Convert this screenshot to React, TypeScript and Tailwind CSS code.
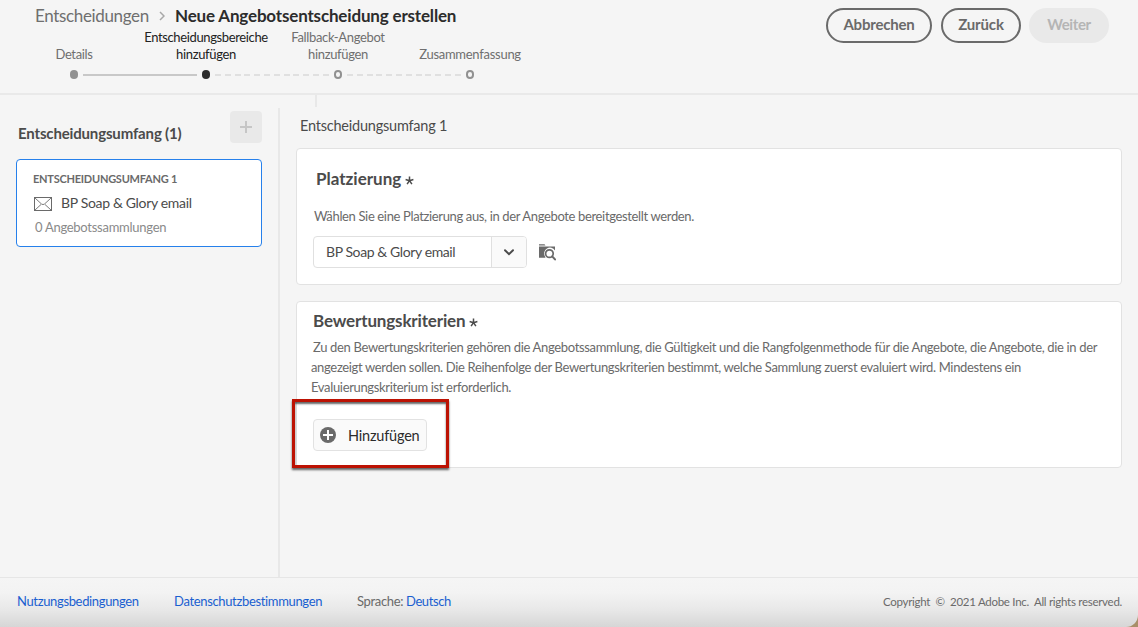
import type { ReactNode } from "react";

function Asterisk() {
  return (
    <svg width="9" height="9" viewBox="0 0 9 9" fill="none" stroke="#4b4b4b" strokeWidth="1.5" className="mt-[2px]">
      <path d="M4.5 4.7V.5M4.5 4.7L.6 3.5M4.5 4.7l3.9-1.2M4.5 4.7L2.1 8.2M4.5 4.7L6.9 8.2" />
    </svg>
  );
}

function FolderSearch() {
  return (
    <svg width="18" height="18" viewBox="0 0 18 18" className="ml-[11px]">
      <path d="M1 1.2h5.5l1 1.3H1zM1 3.4h16v4a5.6 5.6 0 0 0-10 6.1l.5 1.3H1z" fill="#6a6a6a" />
      <circle cx="11.4" cy="10.6" r="3.8" fill="#fff" stroke="#6a6a6a" strokeWidth="1.7" />
      <path d="M14.2 13.4l2.8 3" stroke="#6a6a6a" strokeWidth="2.1" strokeLinecap="round" />
    </svg>
  );
}

function StepLabel({ children, active = false }: { children: ReactNode; active?: boolean }) {
  return (
    <div className={active ? "flex w-[132px] flex-col items-center justify-end text-[#222]" : "flex w-[132px] flex-col items-center justify-end text-[#6f6f6f]"}>
      {children}
    </div>
  );
}

function Panel({ children, className }: { children: ReactNode; className: string }) {
  return <section className={`rounded-[4px] border border-[#e2e2e2] bg-white ${className}`}>{children}</section>;
}

export default function App() {
  return (
    <div className="flex h-[627px] w-[1138px] flex-col overflow-hidden whitespace-nowrap bg-[#f5f5f5] font-['Lato',sans-serif] text-[13px] text-[#4b4b4b]">
      <header className="flex h-[95px] shrink-0 justify-between border-b-2 border-[#e9e9e9]">
        <div>
          <nav className="flex h-7 items-center pt-1 pl-[35px] text-[17px]">
            <span className="w-[124px] tracking-[-0.35px] text-[#6f6f6f]">Entscheidungen</span>
            <svg width="6" height="10" viewBox="0 0 6 10" fill="none" stroke="#a8a8a8" strokeWidth="1.5" className="mr-2.5">
              <path d="M1 1l4 4-4 4" />
            </svg>
            <h1 className="font-bold tracking-[-0.17px] text-[#2c2c2c]">Neue Angebotsentscheidung erstellen</h1>
          </nav>
          <div className="flex h-[35px] pl-2 leading-[17px]">
            <StepLabel>
              <span className="tracking-[-0.35px]">Details</span>
            </StepLabel>
            <StepLabel active>
              <span className="tracking-[-0.37px]">Entscheidungsbereiche</span>
              <span className="tracking-[-0.35px]">hinzufügen</span>
            </StepLabel>
            <StepLabel>
              <span className="tracking-[-0.35px]">Fallback-Angebot</span>
              <span className="tracking-[-0.35px]">hinzufügen</span>
            </StepLabel>
            <StepLabel>
              <span className="tracking-[-0.27px]">Zusammenfassung</span>
            </StepLabel>
          </div>
          <div className="flex items-center pt-[7px] pl-[70px]">
            <i className="h-[9px] w-2 rounded-full bg-[#919191]" />
            <i className="mx-[5px] h-0.5 w-[114px] bg-[#c8c8c8]" />
            <i className="h-[9px] w-2 rounded-full bg-[#2c2c2c]" />
            <i className="mx-[5px] h-0.5 w-[114px] bg-[repeating-linear-gradient(90deg,#e0e0e0_0_6px,transparent_6px_9.8px)]" />
            <i className="h-[9px] w-2 rounded-full border-2 border-[#919191]" />
            <i className="mx-[5px] h-0.5 w-[114px] bg-[repeating-linear-gradient(90deg,#e0e0e0_0_6px,transparent_6px_9.8px)]" />
            <i className="h-[9px] w-2 rounded-full border-2 border-[#919191]" />
          </div>
        </div>
        <div className="flex pt-2 pr-[29px] text-[15px] font-bold text-[#6a6a6a]">
          <button className="mr-[9px] h-[35px] w-[106px] rounded-full border-2 border-[#6a6a6a] pb-[3px] tracking-[-0.2px]">Abbrechen</button>
          <button className="mr-2 h-[35px] w-[80px] rounded-full border-2 border-[#6a6a6a] pb-[3px] tracking-[-0.15px]">Zurück</button>
          <button className="h-[35px] w-[80px] rounded-full bg-[#e9e9e9] pb-[3px] tracking-[-0.4px] text-[#b5b5b5]">Weiter</button>
        </div>
      </header>

      <main className="flex h-[482px] shrink-0">
        <aside className="w-[278px] pt-4 pl-4">
          <div className="flex h-8 w-[246px] justify-between">
            <h2 className="pt-[12px] pl-[2px] text-[15px] leading-5 font-bold tracking-[-0.16px]">Entscheidungsumfang (1)</h2>
            <button className="flex size-8 items-center justify-center rounded-[4px] bg-[#e9e9e9]">
              <svg width="12" height="12" viewBox="0 0 12 12" stroke="#c6c6c6" strokeWidth="2">
                <path d="M6 0v12M0 6h12" />
              </svg>
            </button>
          </div>
          <div className="mt-4 h-[88px] w-[246px] rounded-[4px] border border-[#2680eb] bg-white pt-[11px] pl-[17px]">
            <div className="-ml-px text-[11px] leading-4 font-bold tracking-[-0.24px] text-[#6a6a6a]">ENTSCHEIDUNGSUMFANG 1</div>
            <div className="mt-[7px] flex h-[18px] items-center text-sm tracking-[-0.33px]">
              <svg width="18" height="14" viewBox="0 0 18 14" fill="none" stroke="#6a6a6a" className="mt-0.5 mr-[9px]">
                <rect x=".5" y=".5" width="17" height="13" />
                <path d="M1 1l6.5 6q1.5 1.2 3 0L17 1M1 13l6-5.5M17 13l-6-5.5" strokeWidth=".9" />
              </svg>
              BP Soap &amp; Glory email
            </div>
            <div className="mt-[7px] pl-px leading-4 tracking-[-0.27px] text-[#8a8a8a]">0 Angebotssammlungen</div>
          </div>
        </aside>

        <div className="mt-[13px] w-0.5 bg-[#e8e8e8]" />

        <div className="w-[858px] pr-4 pl-4">
          <div className="ml-[19px] h-3 w-0.5 bg-[#e8e8e8]" />
          <h2 className="mt-[9px] mb-[12px] pl-1 text-[14.5px] leading-5 tracking-[-0.22px]">Entscheidungsumfang 1</h2>
          <Panel className="h-[137px] pl-4">
            <h3 className="flex items-center gap-[4px] pt-[20px] pl-[3px] text-[17px] leading-5 font-bold">
              Platzierung <Asterisk />
            </h3>
            <p className="mt-[18px] pl-[1px] leading-[18px] tracking-[-0.355px] text-[#6a6a6a]">
              Wählen Sie eine Platzierung aus, in der Angebote bereitgestellt werden.
            </p>
            <div className="mt-[11px] flex items-center">
              <div className="flex h-8 w-[214px] overflow-hidden rounded-[4px] border border-[#e0e0e0]">
                <span className="flex-1 pl-3 text-sm leading-[29px] tracking-[-0.4px]">BP Soap &amp; Glory email</span>
                <span className="flex w-[35px] items-center justify-center border-l border-[#e0e0e0] bg-[#fafafa]">
                  <svg width="10" height="7" viewBox="0 0 10 7" fill="none" stroke="#4b4b4b" strokeWidth="2" strokeLinecap="round">
                    <path d="M1 1.2l4 4 4-4" />
                  </svg>
                </span>
              </div>
              <FolderSearch />
            </div>
          </Panel>
          <Panel className="mt-4 h-[167px] pl-[14px] text-[#6a6a6a]">
            <h3 className="flex items-center gap-1 pt-[9px] pl-[2px] text-[17px] leading-5 font-bold tracking-[-0.15px] text-[#4b4b4b]">
              Bewertungskriterien <Asterisk />
            </h3>
            <p className="mt-[6px] pl-0.5 leading-[20px] tracking-[-0.335px]">
              Zu den Bewertungskriterien gehören die Angebotssammlung, die Gültigkeit und die Rangfolgenmethode für die Angebote, die Angebote, die in der
            </p>
            <p className="leading-[21px] tracking-[-0.34px]">
              angezeigt werden sollen. Die Reihenfolge der Bewertungskriterien bestimmt, welche Sammlung zuerst evaluiert wird. Mindestens ein
            </p>
            <p className="leading-[19px] tracking-[-0.34px]">Evaluierungskriterium ist erforderlich.</p>
            <div className="relative mt-[22px] ml-0.5 w-[114px]">
              <button className="flex h-8 w-[114px] items-center rounded-[4px] border border-[#e2e2e2] bg-[#fafafa] pl-1.5 text-[14.5px] tracking-[-0.2px] text-[#2c2c2c]">
                <svg width="16" height="16" viewBox="0 0 16 16" className="mr-3">
                  <circle cx="8" cy="8" r="8" fill="#6a6a6a" />
                  <path d="M8 3v10M3 8h10" stroke="#fff" strokeWidth="2" />
                </svg>
                <span className="pt-0.5">Hinzufügen</span>
              </button>
              <div className="absolute -top-5 -left-[21px] h-[69px] w-[157px] border-3 border-[#bc1203] shadow-[0_2px_2px_rgba(0,0,0,0.6),inset_0_2px_2px_rgba(0,0,0,0.6)]" />
            </div>
          </Panel>
        </div>
      </main>

      <div className="flex-1 bg-[#a88f68]">
        <footer className="flex h-full items-center justify-between rounded-br-xl border-t border-[#e6e6e6] bg-[linear-gradient(180deg,#f5f5f5_0%,#f3f3f3_30%,#e8e8e8_65%,#d6d6d6_100%)] pr-4 pb-0.5 pl-[17px]">
          <div className="flex text-[#1a5fd0]">
            <a className="w-[157px] tracking-[-0.35px]">Nutzungsbedingungen</a>
            <a className="w-[183px] tracking-[-0.34px]">Datenschutzbestimmungen</a>
            <span className="w-[49px] tracking-[-0.35px] text-[#6a6a6a]">Sprache:</span>
            <a className="tracking-[-0.4px]">Deutsch</a>
          </div>
          <span className="text-[11.5px] tracking-[-0.28px] whitespace-pre text-[#6a6a6a]">{"Copyright  ©  2021 Adobe Inc.  All rights reserved."}</span>
        </footer>
      </div>
    </div>
  );
}
